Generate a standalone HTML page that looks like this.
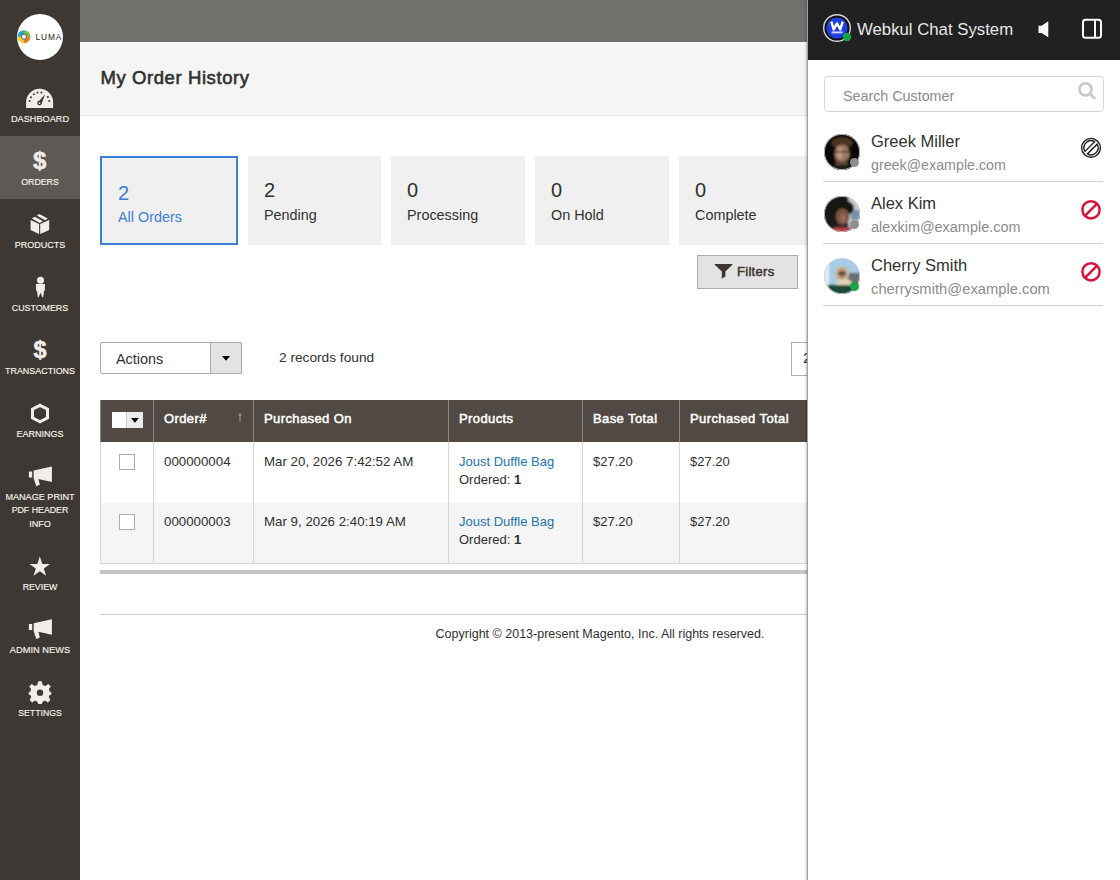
<!DOCTYPE html>
<html><head><meta charset="utf-8">
<style>
*{box-sizing:border-box;margin:0;padding:0}
html,body{width:1120px;height:880px;overflow:hidden;background:#fff;font-family:"Liberation Sans",sans-serif;color:#303030}
.abs{position:absolute;white-space:nowrap}
svg{position:absolute;overflow:visible}
#side{position:absolute;left:0;top:0;width:80px;height:880px;background:#3d3833}
#logo{position:absolute;left:17px;top:14px;width:46px;height:46px;border-radius:50%;background:#fff}
.lb{position:absolute;left:0;width:80px;text-align:center;white-space:nowrap;color:#f7f3eb;font-size:9px;line-height:13.5px;-webkit-text-stroke:0.15px #f7f3eb}
#topbar{position:absolute;left:80px;top:0;width:1040px;height:42px;background:#6f716d}
#titlebar{position:absolute;left:80px;top:42px;width:1040px;height:74px;background:#f5f5f5;border-bottom:1px solid #e3e3e3}
#title{position:absolute;left:100.5px;top:67px;font-size:18.5px;font-weight:normal;-webkit-text-stroke:0.6px #303030;letter-spacing:0.58px;color:#303030;white-space:nowrap}
.tab{position:absolute;top:156px;height:89px;background:#f0f0f0}
.tab .n{position:absolute;left:16px;top:23px;font-size:20px;color:#303030;white-space:nowrap}
.tab .l{position:absolute;left:16px;top:51px;font-size:14.4px;color:#303030;white-space:nowrap}
.t1{border:2px solid #3b7fd8}
.t1 .n,.t1 .l{color:#3b7fd8}
.t1 .n{left:16px;top:24px}
.t1 .l{top:51px}
#filters{position:absolute;left:697px;top:255px;width:101px;height:34px;background:#e3e3e3;border:1px solid #adadad;font-size:13px;font-weight:normal;-webkit-text-stroke:0.5px #41362f;letter-spacing:0.3px;color:#41362f}
#actions{position:absolute;left:100px;top:342px;width:142px;height:32px;border:1px solid #adadad;border-radius:2px 0 0 2px;background:#fff}
#actions .tx{position:absolute;left:15px;top:8px;font-size:14.4px;color:#303030}
#actions .btn{position:absolute;right:0;top:0;width:31px;height:30px;background:#e3e3e3;border-left:1px solid #adadad}
#records{position:absolute;left:279px;top:350px;font-size:13.7px;color:#303030;white-space:nowrap}
#pager{position:absolute;left:791px;top:342px;width:40px;height:34px;border:1px solid #adadad;background:#fff;font-size:14px}
table{position:absolute;left:100px;top:400px;border-collapse:collapse;width:760px;table-layout:fixed}
th{background:#514943;color:#fff;font-size:13px;font-weight:normal;-webkit-text-stroke:0.5px #fff;letter-spacing:0.4px;text-align:left;height:42px;padding:0 10px 5px 10px;border-left:1px solid #8a837f;border-right:1px solid #8a837f;vertical-align:middle;white-space:nowrap}
td{font-size:13.3px;color:#303030;vertical-align:top;padding:11px 10px 0 10px;border-left:1px solid #d6d6d6;border-right:1px solid #d6d6d6;height:61px;white-space:nowrap;line-height:18px}
td.p{font-size:13px}
tr.r2 td{background:#f5f5f5}
tr.r2 td{border-bottom:1px solid #d6d6d6;height:60px;padding-top:10px}
.cb{position:relative;top:1px;left:8px;display:inline-block;width:16px;height:16px;border:1px solid #adadad;background:#fff}
a{color:#2473ad;text-decoration:none}
#scroll{position:absolute;left:100px;top:570px;width:720px;height:4px;background:#c4c4c4}
#footline{position:absolute;left:100px;top:614px;width:1000px;height:1px;background:#cccccc}
#copy{position:absolute;left:80px;width:1040px;top:627px;text-align:center;font-size:12.5px;color:#303030}
/* panel */
#panel{position:absolute;left:807px;top:0;width:313px;height:880px;background:#fff;box-shadow:-1px 0 2px rgba(0,0,0,.25);border-left:1px solid #a0a0a0}
#phead{position:absolute;left:0;top:0;width:312px;height:60px;background:#212121}
#ptitle{position:absolute;left:49px;top:20px;font-size:16.75px;color:#e6e6e6;white-space:nowrap}
#search{position:absolute;left:16px;top:76px;width:280px;height:36px;border:1px solid #d6d6d6;border-radius:4px}
#search .ph{position:absolute;left:18px;top:10.5px;font-size:14.3px;color:#8a8a8a;white-space:nowrap}
.cust{position:absolute;left:15px;width:280px;height:62px;border-bottom:1px solid #d0d0d0}
.cust .av{position:absolute;left:0;top:15px;width:37px;height:37px;border-radius:50%;overflow:hidden}
.cust .dot{position:absolute;left:27px;top:38px;width:9px;height:9px;border-radius:50%;background:#8f8f8f}
.cust .nm{position:absolute;left:48px;top:12px;font-size:16.5px;color:#303030;white-space:nowrap}
.cust .em{position:absolute;left:48px;top:36.5px;font-size:14.25px;color:#8c8c8c;white-space:nowrap}
.cust svg.ban{left:257px;top:16.8px}
</style></head><body>
<div id="side">
  <div id="logo">
    <svg width="46" height="46" viewBox="0 0 46 46" style="left:0;top:0">
      <g transform="translate(7 22.7)">
      <circle r="4.4" fill="none" stroke="#ea7b2c" stroke-width="4.2" stroke-dasharray="6.91 20.74"/>
      <circle r="4.4" fill="none" stroke="#f2cc2a" stroke-width="4.2" stroke-dasharray="6.91 20.74" transform="rotate(90)"/>
      <circle r="4.4" fill="none" stroke="#2aa5d8" stroke-width="4.2" stroke-dasharray="6.91 20.74" transform="rotate(180)"/>
      <circle r="4.4" fill="none" stroke="#7cbc46" stroke-width="4.2" stroke-dasharray="6.91 20.74" transform="rotate(270)"/>
      <circle r="2.6" fill="#fff" stroke="#2d4a2a" stroke-width="0.8"/>
      </g>
      <text x="18.6" y="25.8" font-family="Liberation Sans" font-size="8.3" fill="#262626" letter-spacing="0.85">LUMA</text>
    </svg>
  </div>
  <div style="position:absolute;left:0;top:136px;width:80px;height:63px;background:#5d5955"></div>
  <svg width="80" height="880" style="left:0;top:0" fill="#f1eeea">
    <!-- dashboard gauge -->
    <path d="M26.1 108 L26.1 102.3 A13.5 13.5 0 0 1 53.1 102.3 L53.1 108 Z"/>
    <g fill="#3d3833">
      <circle cx="29.6" cy="100.9" r="1"/><circle cx="31" cy="97.2" r="1"/><circle cx="33.9" cy="94.3" r="1"/><circle cx="37.5" cy="92.5" r="1"/><circle cx="41.4" cy="92.5" r="1"/><circle cx="47.9" cy="97" r="1"/><circle cx="49.3" cy="100.9" r="1"/>
      <path d="M45.2 94.3 L41.4 104 L37.8 102.2 Z"/>
      <circle cx="39.5" cy="103.1" r="2.3"/>
    </g>
    <circle cx="39.5" cy="103.1" r="0.9"/>
    <!-- orders $ -->
    <text x="39.8" y="169.3" font-family="Liberation Sans" font-weight="bold" font-size="24" text-anchor="middle" stroke="#f1eeea" stroke-width="0.5">$</text>
    <!-- products box -->
    <path d="M30.6 220.1 L39.1 224 L39.1 234 L30.6 230.1 Z M40.2 224 L49.2 220 L49.2 230 L40.2 234 Z M31.8 218.4 L34.9 216.8 L43 221.3 L39.7 223.1 Z M36.8 215.5 L39.3 213.9 L47.8 218.4 L45.1 220.2 Z"/>
    <!-- customers person -->
    <circle cx="40.5" cy="280.2" r="3.5"/>
    <path d="M35.9 283.9 L45 283.9 L44.8 290.6 L44 291 L43.2 297.2 L42.4 297.2 L40.5 292.8 L38.6 297.2 L37.8 297.2 L37 291 L36.1 290.6 Z"/>
    <!-- transactions $ -->
    <text x="40" y="358" font-family="Liberation Sans" font-weight="bold" font-size="23.5" text-anchor="middle" stroke="#f1eeea" stroke-width="0.5">$</text>
    <!-- earnings hexagon -->
    <path d="M40 405.3 L47.5 409.2 L47.5 417.9 L40 421.8 L32.5 417.9 L32.5 409.2 Z" fill="none" stroke="#f1eeea" stroke-width="3"/>
    <!-- megaphone 1 -->
    <path d="M28.9 471.4 L32.2 471.4 L32.2 477.4 L28.9 477.4 Z M33.7 470.6 L51.9 466.6 L51.9 482 L38.4 479 L39.8 484.7 L36.3 486.3 L33.7 478.6 Z"/>
    <!-- review star -->
    <path d="M39.8 556.6 L42.3 563.9 L50 563.9 L43.8 568.5 L46.1 575.7 L39.8 571.3 L33.5 575.7 L35.8 568.5 L29.6 563.9 L37.3 563.9 Z"/>
    <!-- megaphone 2 -->
    <path d="M28.9 624.1 L32.2 624.1 L32.2 630.1 L28.9 630.1 Z M33.7 623.3 L51.9 619.3 L51.9 634.7 L38.4 631.7 L39.8 637.4 L36.3 639 L33.7 631.3 Z"/>
    <!-- settings gear -->
    <g transform="translate(40 692.5)">
      <path d="M-1.8 -11.2 L1.8 -11.2 L2.6 -7.6 L5.4 -6.5 L8.2 -8.6 L10.7 -6.1 L8.9 -3.2 L9.9 -0.5 L11.2 -0.5 L11.2 2.2 L9.6 2.4 L8.7 4.6 L10.4 7.4 L7.9 9.9 L5.1 8.1 L2.6 9.2 L1.8 11.4 L-1.8 11.4 L-2.6 9.2 L-5.1 8.1 L-7.9 9.9 L-10.4 7.4 L-8.7 4.6 L-9.6 2.4 L-11.2 2.2 L-11.2 -0.5 L-9.9 -0.5 L-8.9 -3.2 L-10.7 -6.1 L-8.2 -8.6 L-5.4 -6.5 L-2.6 -7.6 Z"/>
      <circle cx="0" cy="0.2" r="3.2" fill="#3d3833"/>
    </g>
  </svg>
  <div class="lb" style="top:113px;font-size:9.2px">DASHBOARD</div>
  <div class="lb" style="top:176px;font-size:8.75px">ORDERS</div>
  <div class="lb" style="top:239px;font-size:9px">PRODUCTS</div>
  <div class="lb" style="top:302px;font-size:8.85px">CUSTOMERS</div>
  <div class="lb" style="top:365px;font-size:8.95px">TRANSACTIONS</div>
  <div class="lb" style="top:428px;font-size:9px">EARNINGS</div>
  <div class="lb" style="top:491px;font-size:9.1px">MANAGE PRINT</div>
  <div class="lb" style="top:504px;font-size:8.8px">PDF HEADER</div>
  <div class="lb" style="top:518px;font-size:9.1px">INFO</div>
  <div class="lb" style="top:581px;font-size:8.8px">REVIEW</div>
  <div class="lb" style="top:644px;font-size:9.3px">ADMIN NEWS</div>
  <div class="lb" style="top:707px;font-size:8.7px">SETTINGS</div>
</div>

<div id="topbar"></div>
<div id="titlebar"></div>
<div id="title">My Order History</div>

<div class="tab t1" style="left:100px;width:138px"><div class="n">2</div><div class="l">All Orders</div></div>
<div class="tab" style="left:248px;width:133px"><div class="n">2</div><div class="l">Pending</div></div>
<div class="tab" style="left:391px;width:134px"><div class="n">0</div><div class="l">Processing</div></div>
<div class="tab" style="left:535px;width:134px"><div class="n">0</div><div class="l">On Hold</div></div>
<div class="tab" style="left:679px;width:134px"><div class="n">0</div><div class="l">Complete</div></div>

<div id="filters">
  <svg width="20" height="16" style="left:16px;top:8px"><path d="M0.6 0 L18.6 0 C18.2 1.8 13.2 5.4 11.4 7.4 L11.4 12.4 L7.8 14.8 L7.8 7.4 C6 5.4 1 1.8 0.6 0 Z" fill="#41362f"/></svg>
  <span class="abs" style="left:39px;top:8px">Filters</span>
</div>

<div id="actions"><div class="tx">Actions</div><div class="btn"><svg width="10" height="6" style="left:11px;top:13px"><path d="M0 0 L8 0 L4 4.8 Z" fill="#000"/></svg></div></div>
<div id="records">2 records found</div>
<div id="pager"><span class="abs" style="left:11px;top:7px;font-size:14.5px">2</span></div>

<table>
<colgroup><col style="width:53px"><col style="width:100px"><col style="width:195px"><col style="width:134px"><col style="width:97px"><col style="width:181px"></colgroup>
<tr><th style="position:relative"><div style="position:absolute;left:11px;top:12px;width:31px;height:16px;background:#ececec"><div style="position:absolute;left:0;top:0;width:15px;height:16px;background:#fff;border-right:1px solid #d0d0d0"></div><svg width="10" height="6" style="left:19px;top:6px"><path d="M0 0 L7.8 0 L3.9 4.8 Z" fill="#000"/></svg></div></th><th style="position:relative">Order#<svg width="6" height="10" style="left:83px;top:13px"><path d="M2.5 9 L2.5 2.5 L1 2.5 L3 0 L5 2.5 L3.5 2.5 L3.5 9 Z" fill="#a79d95"/></svg></th><th>Purchased On</th><th>Products</th><th>Base Total</th><th>Purchased Total</th></tr>
<tr class="r1"><td><span class="cb"></span></td><td>000000004</td><td>Mar 20, 2026 7:42:52 AM</td><td class="p"><a>Joust Duffle Bag</a><br>Ordered: <b>1</b></td><td class="p">$27.20</td><td class="p">$27.20</td></tr>
<tr class="r2"><td><span class="cb"></span></td><td>000000003</td><td>Mar 9, 2026 2:40:19 AM</td><td class="p"><a>Joust Duffle Bag</a><br>Ordered: <b>1</b></td><td class="p">$27.20</td><td class="p">$27.20</td></tr>
</table>
<div id="scroll"></div>
<div id="footline"></div>
<div id="copy">Copyright © 2013-present Magento, Inc. All rights reserved.</div>

<div id="panel">
  <div id="phead">
    <svg width="30" height="30" style="left:14px;top:13px">
      <circle cx="15" cy="15" r="13.3" fill="#111" stroke="#d8d8d8" stroke-width="1.4"/>
      <circle cx="15" cy="15" r="10.6" fill="#1f3fe0"/>
      <path d="M9.3 8.6 L11.7 16.4 L15 10.4 L18.3 16.4 L20.7 8.6" fill="none" stroke="#fff" stroke-width="2.4" stroke-linejoin="round"/>
      <rect x="9.6" y="18.4" width="11" height="2" fill="#c8d0ff"/>
      <circle cx="25" cy="24" r="4.2" fill="#1aa544"/>
    </svg>
    <div id="ptitle">Webkul Chat System</div>
    <svg width="14" height="18" style="left:229px;top:20px"><path d="M1.5 5.7 L4.5 5.7 L11.3 1.3 L11.3 17.3 L4.5 12.9 L1.5 12.9 Z" fill="#fafafa"/></svg>
    <svg width="22" height="22" style="left:274px;top:18px"><rect x="1" y="1.8" width="18" height="18" rx="2.5" fill="none" stroke="#fafafa" stroke-width="2"/><rect x="12" y="2" width="2" height="18" fill="#fafafa"/></svg>
  </div>
  <div id="search"><div class="ph">Search Customer</div>
    <svg width="20" height="20" style="left:253px;top:4px"><circle cx="7.5" cy="8.3" r="6.1" fill="none" stroke="#c8c8c8" stroke-width="2.6"/><path d="M12.2 13 L16.3 17" stroke="#c8c8c8" stroke-width="2.8" stroke-linecap="round"/></svg>
  </div>
  <div class="cust" style="top:120px"><svg class="avs" width="36" height="36" style="left:1px;top:14px"><defs><clipPath id="c1"><circle cx="18" cy="18" r="18"/></clipPath><filter id="bl" x="-20%" y="-20%" width="140%" height="140%"><feGaussianBlur stdDeviation="1.2"/></filter></defs><g clip-path="url(#c1)"><rect width="36" height="36" fill="#0b0908"/><g filter="url(#bl)"><ellipse cx="18" cy="9" rx="11" ry="6" fill="#4a3624"/><ellipse cx="18" cy="20" rx="8" ry="9.5" fill="#9c7862"/><ellipse cx="16" cy="19" rx="3" ry="5.5" fill="#c29c84"/><rect x="10" y="17" width="16" height="1.6" fill="#4a3022"/><path d="M11 23 Q17.5 32 24 23 L24 30 Q17.5 36 11 30 Z" fill="#5a4432"/><rect x="9" y="31" width="18" height="6" fill="#1e1a18"/></g></g><circle cx="18" cy="18" r="17.6" fill="none" stroke="#d8d8d8" stroke-width="0.8"/></svg><div class="dot"></div><div class="nm">Greek Miller</div><div class="em">greek@example.com</div>
    <svg class="ban" width="22" height="22"><g fill="none" stroke="#1e1e1e" stroke-width="1.4"><circle cx="11" cy="10.8" r="9.4"/><path d="M4.9 14.4 A7.1 7.1 0 0 1 14.6 4.7 Z"/><path d="M17.1 7.2 A7.1 7.1 0 0 1 7.4 16.9 Z"/></g></svg>
  </div>
  <div class="cust" style="top:182px"><svg class="avs" width="36" height="36" style="left:1px;top:14px"><defs><clipPath id="c2"><circle cx="18" cy="18" r="18"/></clipPath></defs><g clip-path="url(#c2)"><rect width="36" height="36" fill="#1a1a1a"/><g filter="url(#bl)"><rect x="24" y="0" width="14" height="36" fill="#c4ccd2"/><rect x="27" y="14" width="10" height="10" fill="#7890a8"/><ellipse cx="19" cy="12" rx="11" ry="8" fill="#141210"/><ellipse cx="18.5" cy="21" rx="7" ry="8.5" fill="#7a5242"/><ellipse cx="19" cy="22" rx="2.5" ry="4" fill="#a06a58"/><rect x="9" y="31" width="20" height="6" fill="#b8404a"/></g></g><circle cx="18" cy="18" r="17.6" fill="none" stroke="#d8d8d8" stroke-width="0.8"/></svg><div class="dot"></div><div class="nm">Alex Kim</div><div class="em" style="font-size:14.45px">alexkim@example.com</div>
    <svg class="ban" width="22" height="22"><g fill="none" stroke="#d8133a" stroke-width="2.5"><circle cx="11" cy="10.8" r="8.6"/><path d="M4.9 16.9 L17.1 4.7"/></g></svg>
  </div>
  <div class="cust" style="top:244px"><svg class="avs" width="36" height="36" style="left:1px;top:14px"><defs><clipPath id="c3"><circle cx="18" cy="18" r="18"/></clipPath></defs><g clip-path="url(#c3)"><rect width="36" height="36" fill="#a8cce8"/><g filter="url(#bl)"><rect x="0" y="0" width="5" height="36" fill="#e8ecee"/><rect x="24" y="15" width="14" height="15" fill="#6a6e70"/><ellipse cx="18" cy="16" rx="7" ry="8" fill="#c8b89a"/><ellipse cx="18" cy="16" rx="4" ry="5" fill="#b08068"/><rect x="14" y="14" width="8" height="2.5" fill="#3a2a20"/><ellipse cx="20" cy="25" rx="8" ry="4" fill="#e0d4b8"/><rect x="3" y="27" width="30" height="10" fill="#1f4a3c"/></g></g><circle cx="18" cy="18" r="17.6" fill="none" stroke="#d8d8d8" stroke-width="0.8"/></svg><div class="dot" style="background:#1aa544"></div><div class="nm">Cherry Smith</div><div class="em" style="font-size:14.75px">cherrysmith@example.com</div>
    <svg class="ban" width="22" height="22"><g fill="none" stroke="#d8133a" stroke-width="2.5"><circle cx="11" cy="10.8" r="8.6"/><path d="M4.9 16.9 L17.1 4.7"/></g></svg>
  </div>
</div>
</body></html>
